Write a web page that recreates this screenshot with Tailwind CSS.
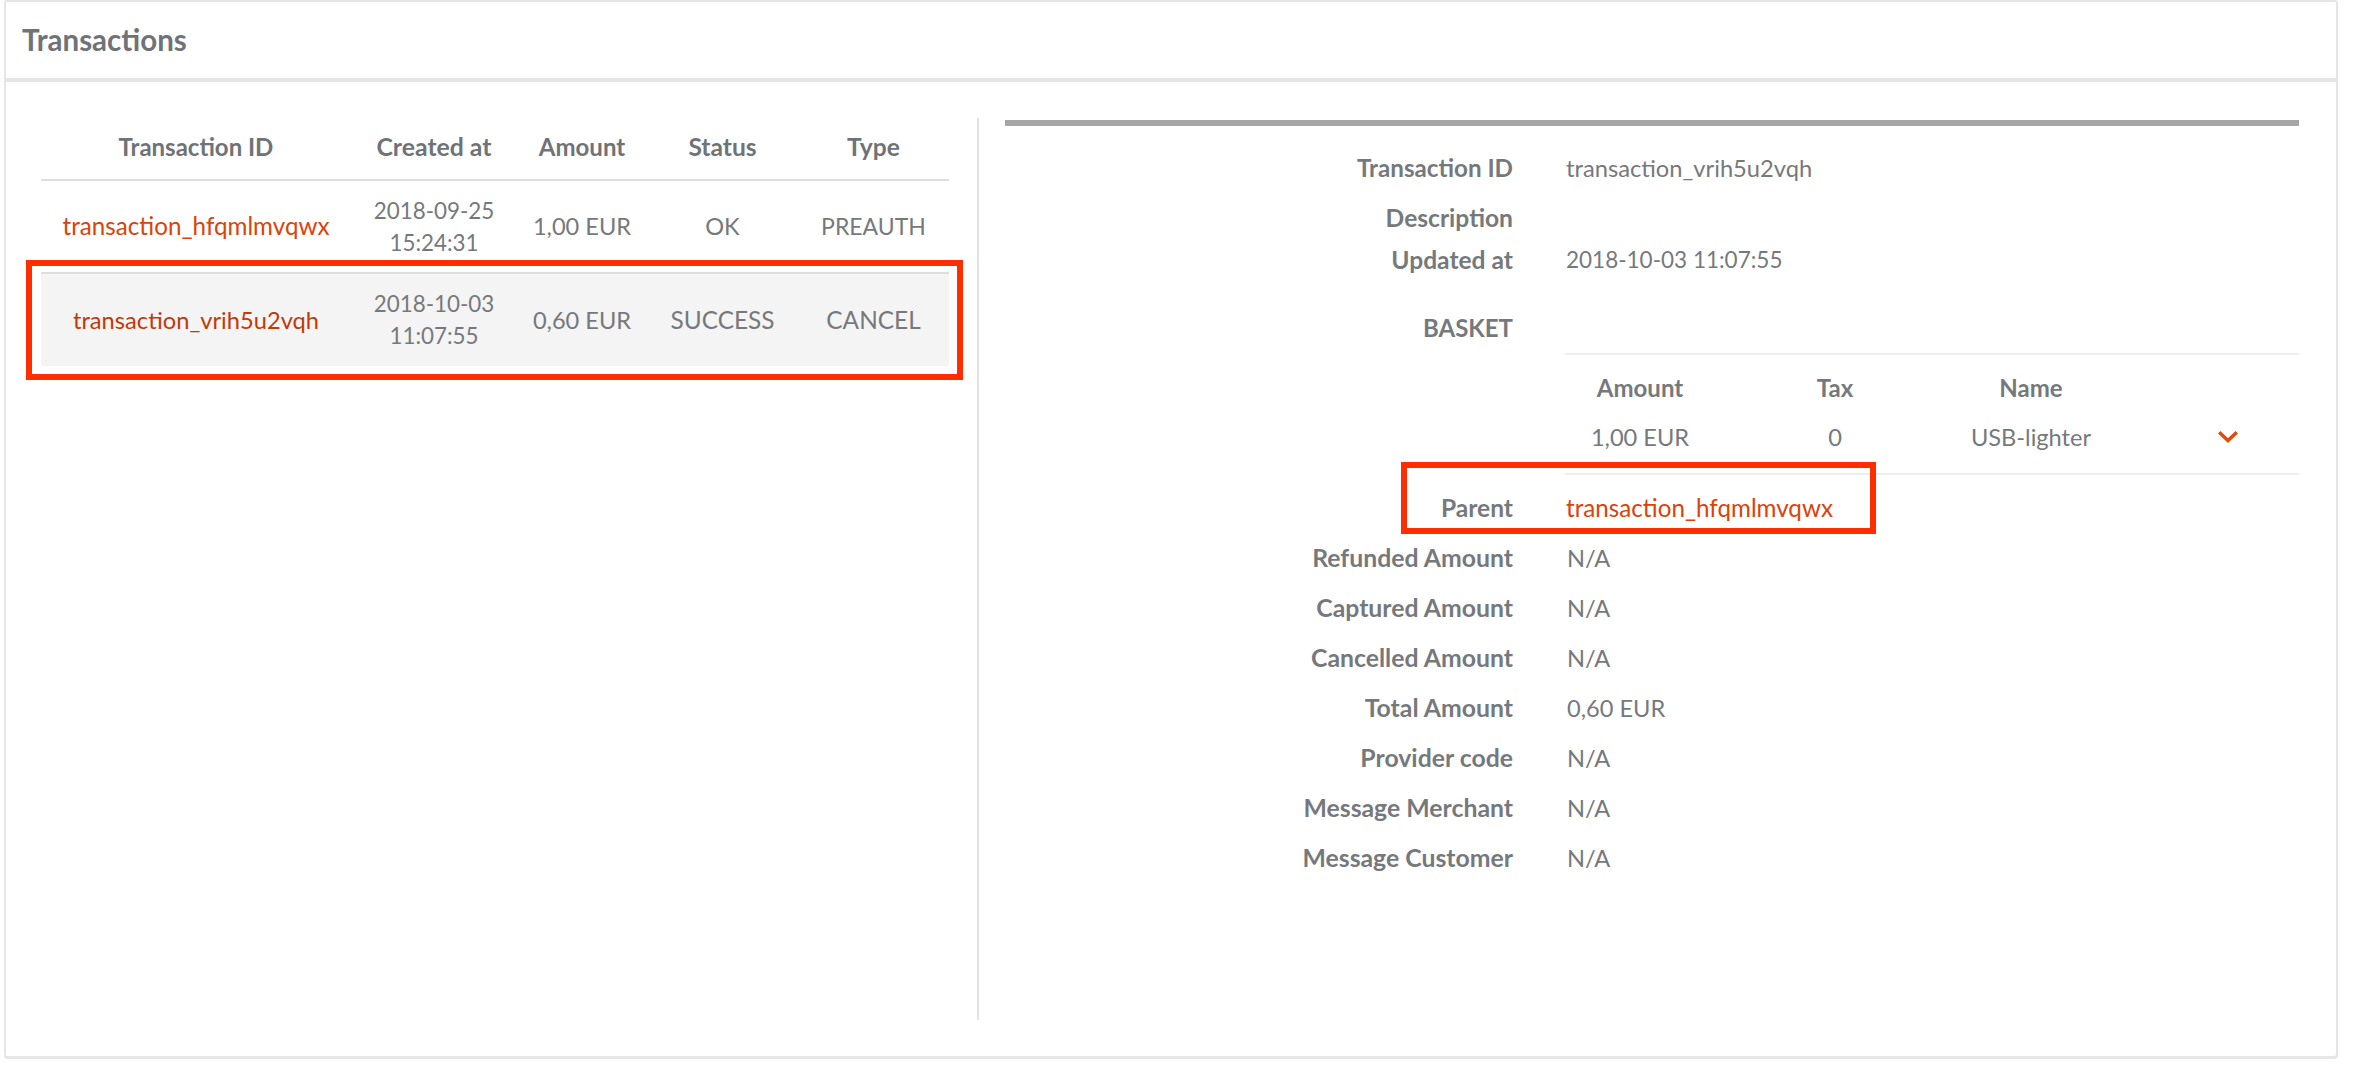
<!DOCTYPE html>
<html lang="en">
<head>
  <meta charset="UTF-8" />
  <title>Transactions</title>
  <script src="https://cdn.jsdelivr.net/npm/@tailwindcss/browser@4"></script>
</head>
<body class="bg-white font-['Lato',sans-serif] text-[23.6px] leading-[32px] text-[#76797c]">
  <div class="relative w-[2355px] h-[1072px] pl-[4px] pr-[17px]">

    <!-- Header -->
    <div class="h-[82px] flex items-center pl-[16px] bg-white border-2 border-b-4 border-[#e6e6e6] rounded-t-[3px]">
      <h1 class="text-[29.5px] font-bold text-[#6f7377]">Transactions</h1>
    </div>

    <!-- Card -->
    <div class="h-[977px] flex pt-[36px] border-x-2 border-b-[3px] border-[#e6e6e6] rounded-b-[4px]">

      <!-- Left: transaction list -->
      <div class="w-[973px] h-[902px] pl-[35px] border-r-2 border-[#e2e2e2]">
        <table class="w-[908px] table-fixed text-center">
          <thead>
            <tr class="h-[62px] border-b-2 border-[#dedede] text-[#6f7377]">
              <th class="w-[310px] pb-[3px] text-[24px] font-bold">Transaction ID</th>
              <th class="w-[166px] pb-[3px] text-[24.8px] font-bold">Created at</th>
              <th class="w-[130px] pb-[3px] text-[24px] font-bold">Amount</th>
              <th class="w-[151px] pb-[3px] text-[24.6px] font-bold">Status</th>
              <th class="w-[151px] pb-[3px] text-[24.6px] font-bold">Type</th>
            </tr>
          </thead>
          <tbody>
            <tr class="h-[93px]">
              <td class="pb-[2px] text-[24.2px] text-[#dc4209]">transaction_hfqmlmvqwx</td>
              <td class="text-[22.4px]">2018-09-25<br>15:24:31</td>
              <td class="pb-[2px]">1,00 EUR</td>
              <td class="pb-[2px]">OK</td>
              <td class="pb-[2px] text-[23px]">PREAUTH</td>
            </tr>
            <tr class="h-[93px] border-t-2 border-[#dedede] bg-[#f4f4f4]">
              <td class="text-[23.7px] text-[#c23a05]">transaction_vrih5u2vqh</td>
              <td class="text-[22.4px]">2018-10-03<br>11:07:55</td>
              <td>0,60 EUR</td>
              <td class="text-[24.4px]">SUCCESS</td>
              <td class="text-[24.4px]">CANCEL</td>
            </tr>
          </tbody>
        </table>
      </div>

      <!-- Right: detail -->
      <div class="w-[1294px] ml-[26px] font-normal">
        <div class="mt-[2px] h-[6px] bg-[#a6a6a6]"></div>

        <div class="flex items-center h-[40px] mt-[22px]">
          <div class="w-[508px] text-right text-[24.2px] font-bold">Transaction ID</div>
          <div class="ml-[53px] text-[23.7px]">transaction_vrih5u2vqh</div>
        </div>
        <div class="flex items-center h-[40px] mt-[10px]">
          <div class="w-[508px] text-right text-[24.6px] font-bold">Description</div>
        </div>
        <div class="flex items-center h-[40px] mt-[2px]">
          <div class="w-[508px] text-right text-[24.6px] font-bold">Updated at</div>
          <div class="ml-[53px] text-[22.5px]">2018-10-03 11:07:55</div>
        </div>
        <div class="flex items-center h-[40px] mt-[28px]">
          <div class="w-[508px] text-right text-[24px] font-bold">BASKET</div>
        </div>

        <!-- Basket -->
        <div class="ml-[560px] mt-[5px] border-y-2 border-[#eeeeee] pb-[20px]">
          <div class="grid grid-cols-[150px_240px_152px_1fr] h-[66px] items-center text-center text-[24px] font-bold">
            <div>Amount</div>
            <div>Tax</div>
            <div>Name</div>
            <div></div>
          </div>
          <div class="grid grid-cols-[150px_240px_152px_1fr] h-[32px] items-center text-center">
            <div>1,00 EUR</div>
            <div>0</div>
            <div>USB-lighter</div>
            <div class="flex justify-end pr-[61px]">
              <svg width="20" height="12" viewBox="0 0 20 12" fill="none" stroke="#e04a0a" stroke-width="3.4"><path d="M1.2 1.2 L10 9.6 L18.8 1.2"/></svg>
            </div>
          </div>
        </div>

        <div class="flex items-center h-[50px] mt-[8px]">
          <div class="w-[508px] text-right text-[24.6px] font-bold">Parent</div>
          <div class="ml-[53px] text-[24.2px] text-[#dc4209]">transaction_hfqmlmvqwx</div>
        </div>
        <div class="flex items-center h-[50px]">
          <div class="w-[508px] text-right text-[24.8px] font-bold">Refunded Amount</div>
          <div class="ml-[54px]">N/A</div>
        </div>
        <div class="flex items-center h-[50px]">
          <div class="w-[508px] text-right text-[24.8px] font-bold">Captured Amount</div>
          <div class="ml-[54px]">N/A</div>
        </div>
        <div class="flex items-center h-[50px]">
          <div class="w-[508px] text-right text-[24.8px] font-bold">Cancelled Amount</div>
          <div class="ml-[54px]">N/A</div>
        </div>
        <div class="flex items-center h-[50px]">
          <div class="w-[508px] text-right text-[24.8px] font-bold">Total Amount</div>
          <div class="ml-[54px]">0,60 EUR</div>
        </div>
        <div class="flex items-center h-[50px]">
          <div class="w-[508px] text-right text-[24.8px] font-bold">Provider code</div>
          <div class="ml-[54px]">N/A</div>
        </div>
        <div class="flex items-center h-[50px]">
          <div class="w-[508px] text-right text-[24.8px] font-bold">Message Merchant</div>
          <div class="ml-[54px]">N/A</div>
        </div>
        <div class="flex items-center h-[50px]">
          <div class="w-[508px] text-right text-[24.8px] font-bold">Message Customer</div>
          <div class="ml-[54px]">N/A</div>
        </div>
      </div>
    </div>

    <!-- Red annotation boxes -->
    <div class="absolute left-[26px] top-[260px] w-[937px] h-[120px] border-[6px] border-[#ff2d00]"></div>
    <div class="absolute left-[1401px] top-[462px] w-[475px] h-[72px] border-[6px] border-[#ff2d00]"></div>
  </div>
</body>
</html>
